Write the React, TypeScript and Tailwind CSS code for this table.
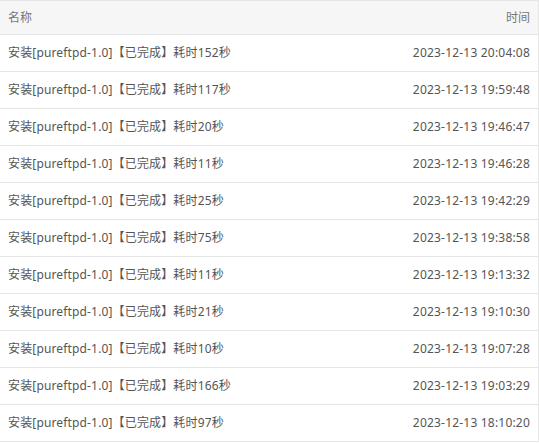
import React from 'react';

type LogRow = { name: string; time: string };

const rows: LogRow[] = [
  { name: '安装[pureftpd-1.0]【已完成】耗时152秒', time: '2023-12-13 20:04:08' },
  { name: '安装[pureftpd-1.0]【已完成】耗时117秒', time: '2023-12-13 19:59:48' },
  { name: '安装[pureftpd-1.0]【已完成】耗时20秒', time: '2023-12-13 19:46:47' },
  { name: '安装[pureftpd-1.0]【已完成】耗时11秒', time: '2023-12-13 19:46:28' },
  { name: '安装[pureftpd-1.0]【已完成】耗时25秒', time: '2023-12-13 19:42:29' },
  { name: '安装[pureftpd-1.0]【已完成】耗时75秒', time: '2023-12-13 19:38:58' },
  { name: '安装[pureftpd-1.0]【已完成】耗时11秒', time: '2023-12-13 19:13:32' },
  { name: '安装[pureftpd-1.0]【已完成】耗时21秒', time: '2023-12-13 19:10:30' },
  { name: '安装[pureftpd-1.0]【已完成】耗时10秒', time: '2023-12-13 19:07:28' },
  { name: '安装[pureftpd-1.0]【已完成】耗时166秒', time: '2023-12-13 19:03:29' },
  { name: '安装[pureftpd-1.0]【已完成】耗时97秒', time: '2023-12-13 18:10:20' },
];

const App: React.FC = () => {
  return (
    <div className="w-[539px] h-[443px] bg-white overflow-hidden font-['Noto_Sans','Noto_Sans_CJK_SC',sans-serif] text-[12px]">
      <div className="border-t border-r border-[#e6e6e6]">
        {/* 表头 */}
        <div className="flex justify-between items-center h-[34px] px-2 bg-[#f6f6f6] border-b border-[#e6e6e6] text-[#777]">
          <span>名称</span>
          <span>时间</span>
        </div>
        {/* 日志列表 */}
        {rows.map((row, i) => (
          <div
            key={i}
            className="flex justify-between items-center h-[37px] px-2 border-b border-[#e6e6e6] text-[#555]"
          >
            <span className="tracking-[0.15px]">{row.name}</span>
            <span className="tracking-[0.2px]">{row.time}</span>
          </div>
        ))}
      </div>
    </div>
  );
};

export default App;
